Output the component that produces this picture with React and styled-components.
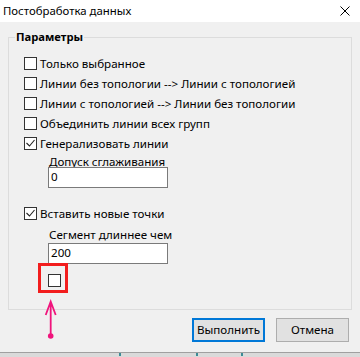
import React from "react";
import styled, { createGlobalStyle } from "styled-components";

const Global = createGlobalStyle`
  html, body { margin: 0; padding: 0; background: #dadada; }
  body { font-family: "Noto Sans", "Open Sans", sans-serif; font-size: 11.6px; color: #000; }
  * { box-sizing: border-box; }
`;

const Screen = styled.div`
  width: 360px;
  height: 357px;
  overflow: hidden;
  display: flex;
  flex-direction: column;
`;

const Window = styled.div`
  position: relative;
  width: 360px;
  height: 353px;
  background: #f0f0f0;
  border-bottom: 1px solid #a0a0a0;
  display: flex;
  flex-direction: column;
`;

const TitleBar = styled.div`
  height: 22px;
  background: #fff;
  display: flex;
  align-items: center;
  justify-content: space-between;
  padding: 0 10px 0 3px;
  font-size: 11.4px;
  line-height: 16px;
`;

const CloseBtn = styled.svg`
  width: 10px;
  height: 10px;
  display: block;
`;

const Group = styled.fieldset`
  margin: 7px 8px 0;
  padding: 0;
  border: 1px solid #dcdcdc;
  min-width: 0;
`;

const Legend = styled.legend`
  margin-left: 6px;
  padding: 0 1px;
  font-weight: 700;
  font-size: 11.2px;
  line-height: 16px;
`;

const Content = styled.div`
  height: 264px;
  padding: 9px 0 0 15px;
  display: flex;
  flex-direction: column;
  align-items: flex-start;
`;

const Row = styled.label`
  height: 20px;
  display: flex;
  align-items: flex-start;
  gap: 3px;
  margin-top: ${(p) => p.$mt || 0}px;
  white-space: nowrap;
`;

const Box = styled.span`
  width: 13px;
  height: 13px;
  margin-top: 3px;
  flex: none;
  background: #fff;
  border: 1px solid #333;
  display: flex;
  align-items: center;
  justify-content: center;
`;

const RowText = styled.span`
  line-height: 18px;
  margin-top: 1px;
`;

const Field = styled.div`
  margin-left: 24px;
  margin-top: ${(p) => p.$mt}px;
  display: flex;
  flex-direction: column;
`;

const FieldLabel = styled.span`
  line-height: 11px;
  height: 11px;
  padding-left: 1px;
`;

const Input = styled.div`
  width: 120px;
  height: 21px;
  margin-top: ${(p) => p.$mt}px;
  background: #fff;
  border: 1px solid #7a7a7a;
  padding-left: 2px;
  line-height: 18px;
`;

const Highlight = styled.div`
  width: 30px;
  height: 30px;
  margin: -1px 0 0 14px;
  border: 3px solid #f21d1d;
  padding: 5px 0 0 7px;
`;

const Footer = styled.div`
  display: flex;
  justify-content: flex-end;
  gap: 11px;
  padding: 8px 11px 0 0;
`;

const Button = styled.div`
  width: 73px;
  height: 24px;
  background: #e1e1e1;
  border: ${(p) => (p.$default ? "2px solid #0078d7" : "1px solid #adadad")};
  display: flex;
  align-items: center;
  justify-content: center;
  line-height: 16px;
`;

const Arrow = styled.svg`
  position: absolute;
  left: 43px;
  top: 298px;
  width: 16px;
  height: 44px;
`;

const Strip = styled.svg`
  display: block;
  width: 360px;
  height: 4px;
`;

function Check({ checked }) {
  return (
    <Box>
      {checked && (
        <svg width="11" height="11" viewBox="0 0 11 11">
          <polyline points="1.5,5 4.5,8 9.5,2" fill="none" stroke="#222" strokeWidth="1.1" />
        </svg>
      )}
    </Box>
  );
}

function CheckRow({ children, checked, mt }) {
  return (
    <Row $mt={mt}>
      <Check checked={checked} />
      <RowText>{children}</RowText>
    </Row>
  );
}

export default function App() {
  return (
    <Screen>
      <Global />
      <Window>
        <TitleBar>
          <span>Постобработка данных</span>
          <CloseBtn viewBox="0 0 10 10">
            <path d="M0.5 0.5 L9.5 9.5 M9.5 0.5 L0.5 9.5" stroke="#000" strokeWidth="1" />
          </CloseBtn>
        </TitleBar>
        <Group>
          <Legend>Параметры</Legend>
          <Content>
            <CheckRow>Только выбранное</CheckRow>
            <CheckRow>Линии без топологии --&gt; Линии с топологией</CheckRow>
            <CheckRow>Линии с топологией --&gt; Линии без топологии</CheckRow>
            <CheckRow>Объединить линии всех групп</CheckRow>
            <CheckRow checked>Генерализовать линии</CheckRow>
            <Field $mt={2}>
              <FieldLabel>Допуск сглаживания</FieldLabel>
              <Input $mt={0}>0</Input>
            </Field>
            <CheckRow checked mt={16}>Вставить новые точки</CheckRow>
            <Field $mt={5}>
              <FieldLabel>Сегмент длиннее чем</FieldLabel>
              <Input $mt={3}>200</Input>
            </Field>
            <Highlight>
              <Check />
            </Highlight>
          </Content>
        </Group>
        <Footer>
          <Button $default>Выполнить</Button>
          <Button>Отмена</Button>
        </Footer>
        <Arrow viewBox="0 0 16 44">
          <path d="M7.7 4 L7.7 38 M2.7 17 L7.7 3.5 L12.7 17" fill="none" stroke="#f0147c" strokeWidth="1.8" />
          <circle cx="7.7" cy="38" r="2.8" fill="#f0147c" />
        </Arrow>
      </Window>
      <Strip viewBox="0 0 360 4">
        <rect x="119" y="0" width="2" height="3" fill="#3c8c96" />
        <rect x="196" y="0" width="2" height="3" fill="#3c8c96" />
        <rect x="241" y="0" width="2" height="3" fill="#3c8c96" />
      </Strip>
    </Screen>
  );
}
